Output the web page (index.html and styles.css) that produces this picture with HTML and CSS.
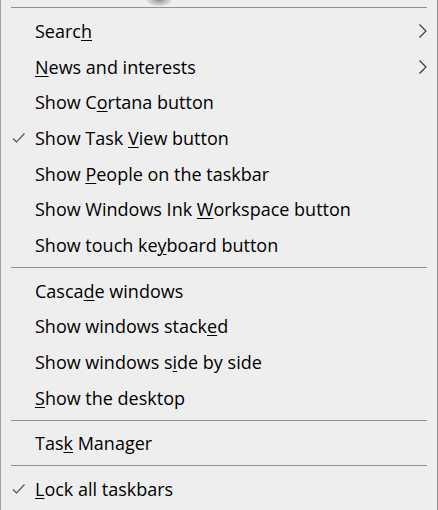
FILE: index.html
```html
<!DOCTYPE html>
<html>
<head>
<meta charset="utf-8">
<link rel="stylesheet" href="styles.css">
</head>
<body>
<div class="menu">
  <div class="shadow-blob"></div>
  <div class="sep"></div>
  <div class="item"><span class="label">Searc<u>h</u></span><svg class="chev" width="10" height="16" viewBox="0 0 10 16"><path d="M1.5 1.5 L8 8 L1.5 14.5" fill="none" stroke="#333" stroke-width="1.1"/></svg></div>
  <div class="item"><span class="label"><u>N</u>ews and interests</span><svg class="chev" width="10" height="16" viewBox="0 0 10 16"><path d="M1.5 1.5 L8 8 L1.5 14.5" fill="none" stroke="#333" stroke-width="1.1"/></svg></div>
  <div class="item"><span class="label">Show C<u>o</u>rtana button</span></div>
  <div class="item"><svg class="check" width="14" height="12" viewBox="0 0 14 12"><path d="M1 6.5 L4.5 10 L12.5 1.5" fill="none" stroke="#4a4f58" stroke-width="1.1"/></svg><span class="label">Show Task <u>V</u>iew button</span></div>
  <div class="item"><span class="label">Show <u>P</u>eople on the taskbar</span></div>
  <div class="item"><span class="label">Show Windows Ink <u>W</u>orkspace button</span></div>
  <div class="item"><span class="label">Show touch ke<u>y</u>board button</span></div>
  <div class="sep"></div>
  <div class="item"><span class="label">Casca<u>d</u>e windows</span></div>
  <div class="item"><span class="label">Show windows stack<u>e</u>d</span></div>
  <div class="item"><span class="label">Show windows s<u>i</u>de by side</span></div>
  <div class="item"><span class="label"><u>S</u>how the desktop</span></div>
  <div class="sep"></div>
  <div class="item"><span class="label">Tas<u>k</u> Manager</span></div>
  <div class="sep"></div>
  <div class="item"><svg class="check" width="14" height="12" viewBox="0 0 14 12"><path d="M1 6.5 L4.5 10 L12.5 1.5" fill="none" stroke="#4a4f58" stroke-width="1.1"/></svg><span class="label"><u>L</u>ock all taskbars</span></div>
</div>
</body>
</html>
```
FILE: styles.css
```css
html, body {
  margin: 0;
  padding: 0;
  background: #eeeeee;
}
body {
  width: 438px;
  height: 510px;
  overflow: hidden;
}
.menu {
  position: relative;
  box-sizing: border-box;
  width: 438px;
  height: 510px;
  background: #eeeeee;
  border-left: 1px solid #a0a0a0;
  border-right: 1px solid #8c8c8c;
  padding-top: 3px;
  font-family: "Open Sans", "Noto Sans", sans-serif;
  font-size: 18px;
  color: #000;
}
.shadow-blob {
  position: absolute;
  left: 146px;
  top: -6px;
  width: 24px;
  height: 12px;
  border-radius: 50%;
  background: radial-gradient(ellipse at center, rgba(110,110,110,0.75) 0%, rgba(140,140,140,0.35) 50%, rgba(238,238,238,0) 100%);
}
.sep {
  height: 10px;
  box-sizing: border-box;
  padding-top: 4px;
  margin: 0 10px 0 10px;
}
.sep::before {
  content: "";
  display: block;
  height: 1px;
  background: #919191;
}
.item {
  position: relative;
  height: 35.7px;
  display: flex;
  align-items: center;
  padding-left: 34px;
}
.label {
  white-space: nowrap;
  line-height: 20px;
}
.label u {
  text-decoration-thickness: 1px;
  text-underline-offset: 2px;
}
.check {
  position: absolute;
  left: 11px;
  top: 12px;
}
.chev {
  position: absolute;
  left: 417px;
  top: 10px;
}
```
